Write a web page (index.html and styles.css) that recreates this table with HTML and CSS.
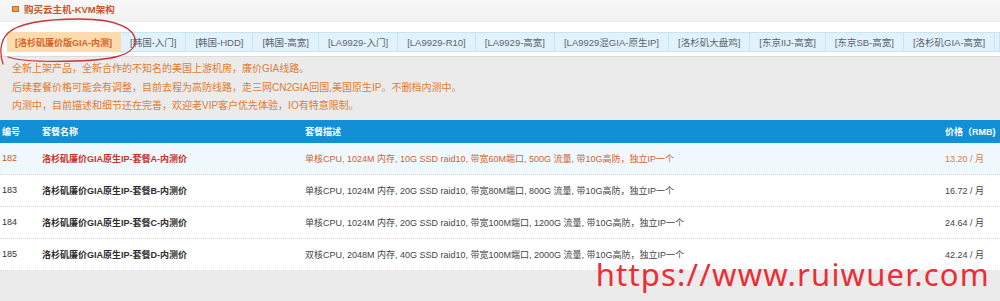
FILE: index.html
```html
<!DOCTYPE html>
<html lang="zh-CN">
<head>
<meta charset="utf-8">
<title>购买云主机-KVM架构</title>
<link rel="stylesheet" href="styles.css">
</head>
<body>
<div class="page">
  <div class="topbar">
    <span class="title-icon"></span>
    <span class="title">购买云主机-KVM架构</span>
  </div>
  <div class="tabs-wrap">
    <div class="tabs">
      <span class="tab active">[洛杉矶廉价版GIA-内测]</span>
      <span class="tab">[韩国-入门]</span>
      <span class="tab">[韩国-HDD]</span>
      <span class="tab">[韩国-高宽]</span>
      <span class="tab">[LA9929-入门]</span>
      <span class="tab">[LA9929-R10]</span>
      <span class="tab">[LA9929-高宽]</span>
      <span class="tab">[LA9929混GIA-原生IP]</span>
      <span class="tab">[洛杉矶大盘鸡]</span>
      <span class="tab">[东京IIJ-高宽]</span>
      <span class="tab">[东京SB-高宽]</span>
      <span class="tab">[洛杉矶GIA-高宽]</span>
      <span class="tab tab-rest"></span>
    </div>
    <svg class="circle" width="150" height="70" viewBox="0 0 150 70">
      <path d="M3 64 C 0 55, -1 42, 8 33 C 20 22, 50 19, 80 19 C 115 19, 137 28, 135 43 C 133 56, 110 60, 75 61 C 45 62, 20 61, 8 57" fill="none" stroke="#c8343a" stroke-width="1.3" stroke-linecap="round"/>
    </svg>
  </div>
  <div class="notice">
    <p>全新上架产品，全新合作的不知名的美国上游机房，廉价GIA线路。</p>
    <p>后续套餐价格可能会有调整，目前去程为高防线路，走三网CN2GIA回国,美国原生IP。不删档内测中。</p>
    <p>内测中，目前描述和细节还在完善，欢迎老VIP客户优先体验，IO有特意限制。</p>
  </div>
  <div class="table">
    <div class="row head">
      <span>编号</span>
      <span>套餐名称</span>
      <span>套餐描述</span>
      <span>价格（RMB)</span>
    </div>
    <div class="row hot">
      <span class="num">182</span>
      <span class="name">洛杉矶廉价GIA原生IP-套餐A-内测价</span>
      <span class="desc">单核CPU, 1024M 内存, 10G SSD raid10, 带宽60M端口, 500G 流量, 带10G高防，独立IP一个</span>
      <span class="price">13.20 / 月</span>
    </div>
    <div class="row">
      <span class="num">183</span>
      <span class="name">洛杉矶廉价GIA原生IP-套餐B-内测价</span>
      <span class="desc">单核CPU, 1024M 内存, 20G SSD raid10, 带宽80M端口, 800G 流量, 带10G高防，独立IP一个</span>
      <span class="price">16.72 / 月</span>
    </div>
    <div class="row">
      <span class="num">184</span>
      <span class="name">洛杉矶廉价GIA原生IP-套餐C-内测价</span>
      <span class="desc">单核CPU, 1024M 内存, 20G SSD raid10, 带宽100M端口, 1200G 流量, 带10G高防，独立IP一个</span>
      <span class="price">24.64 / 月</span>
    </div>
    <div class="row last">
      <span class="num">185</span>
      <span class="name">洛杉矶廉价GIA原生IP-套餐D-内测价</span>
      <span class="desc">双核CPU, 2048M 内存, 40G SSD raid10, 带宽100M端口, 2000G 流量, 带10G高防，独立IP一个</span>
      <span class="price">42.24 / 月</span>
    </div>
  </div>
  <div class="watermark">https://www.ruiwuer.com</div>
</div>
</body>
</html>
```

FILE: styles.css
```css
html, body {
  margin: 0;
  padding: 0;
}
body {
  background: #ebebeb;
  font-family: "Liberation Sans", "Noto Sans CJK SC", sans-serif;
  font-size: 9px;
  color: #333;
  width: 1000px;
  height: 301px;
  overflow: hidden;
}
.page {
  position: relative;
  height: 301px;
}
.topbar {
  height: 22px;
  background: linear-gradient(#f7f7f7, #f1f1f1);
  display: flex;
  align-items: center;
  padding-left: 12px;
  gap: 5px;
  box-sizing: border-box;
  padding-bottom: 5px;
}
.title-icon {
  width: 5px;
  height: 4px;
  background: #e6a23c;
  border: 1px solid #c8672a;
}
.title {
  font-size: 9.5px;
  font-weight: bold;
  color: #c8562a;
}
.tabs-wrap {
  position: relative;
  background: #fff;
  height: 35px;
  box-sizing: border-box;
  padding-top: 10px;
  padding-left: 7px;
  border-bottom: 1px solid #dcdcdc;
}
.tabs {
  display: flex;
  white-space: nowrap;
  overflow: hidden;
  height: 20px;
}
.tab {
  flex: none;
  height: 20px;
  line-height: 20px;
  box-sizing: border-box;
  padding: 0 9px;
  background: #e2f2fb;
  border: 1px solid #c9e4f3;
  border-left: none;
  color: #5b6570;
  font-size: 9.5px;
}
.tab.active {
  background: #fcdcae;
  border-color: #fcdcae;
  color: #d6622a;
  font-weight: bold;
  padding: 0 8px;
  font-size: 9px;
}
.tab-rest {
  flex: 1;
  padding: 0;
}
.circle {
  position: absolute;
  left: 0;
  top: -22px;
}
.notice {
  padding: 3px 0 4px 12px;
}
.notice p {
  margin: 0;
  line-height: 18.5px;
  font-size: 10px;
  color: #e37b2f;
}
.table {
  background: #fff;
}
.row {
  display: grid;
  grid-template-columns: 40px 263px 640px 1fr;
  padding-left: 2px;
  height: 32px;
  align-items: center;
  border-bottom: 1px dotted #d8d8d8;
  box-sizing: border-box;
  white-space: nowrap;
}
.row.head {
  height: 23px;
  background: #1190d8;
  color: #fff;
  font-weight: bold;
  border-bottom: none;
}
.row.hot {
  background: #eff8fd;
}
.name {
  font-weight: bold;
  color: #2e2e2e;
}
.desc, .price {
  color: #444;
}
.row.hot .num { color: #d4502c; }
.row.hot .name { color: #c7302c; }
.row.hot .desc { color: #d4602e; }
.row.hot .price { color: #e0783a; }
.watermark {
  position: absolute;
  right: 10px;
  top: 262px;
  white-space: nowrap;
  font-family: "Noto Sans", sans-serif;
  font-size: 31px;
  line-height: 24px;
  color: #ec2d36;
  letter-spacing: 1.2px;
}
```
